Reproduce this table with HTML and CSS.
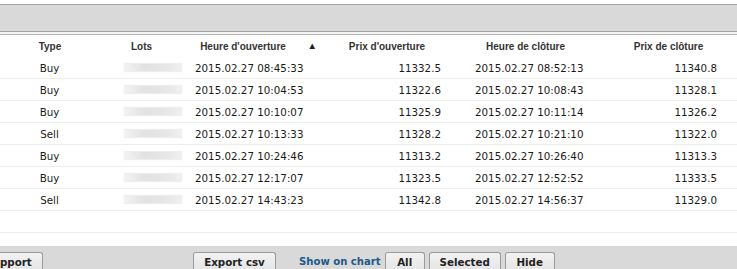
FILE: index.html
```html
<!DOCTYPE html>
<html>
<head>
<meta charset="utf-8">
<link rel="stylesheet" href="styles.css">
</head>
<body>
<div class="panel">
  <div class="topbar"></div>
  <div class="tablewrap">
    <table class="trades">
      <colgroup>
        <col class="c1"><col class="c2"><col class="c3"><col class="c4"><col class="c5"><col class="c6">
      </colgroup>
      <thead>
        <tr>
          <th>Type</th>
          <th>Lots</th>
          <th class="sorted"><span class="lbl">Heure d'ouverture</span><span class="arrow">▲</span></th>
          <th>Prix d'ouverture</th>
          <th>Heure de clôture</th>
          <th>Prix de clôture</th>
        </tr>
      </thead>
      <tbody>
        <tr><td class="type">Buy</td><td><div class="blur"></div></td><td class="ot">2015.02.27 08:45:33</td><td class="op">11332.5</td><td class="ct">2015.02.27 08:52:13</td><td class="cp">11340.8</td></tr>
        <tr><td class="type">Buy</td><td><div class="blur"></div></td><td class="ot">2015.02.27 10:04:53</td><td class="op">11322.6</td><td class="ct">2015.02.27 10:08:43</td><td class="cp">11328.1</td></tr>
        <tr><td class="type">Buy</td><td><div class="blur"></div></td><td class="ot">2015.02.27 10:10:07</td><td class="op">11325.9</td><td class="ct">2015.02.27 10:11:14</td><td class="cp">11326.2</td></tr>
        <tr><td class="type">Sell</td><td><div class="blur"></div></td><td class="ot">2015.02.27 10:13:33</td><td class="op">11328.2</td><td class="ct">2015.02.27 10:21:10</td><td class="cp">11322.0</td></tr>
        <tr><td class="type">Buy</td><td><div class="blur"></div></td><td class="ot">2015.02.27 10:24:46</td><td class="op">11313.2</td><td class="ct">2015.02.27 10:26:40</td><td class="cp">11313.3</td></tr>
        <tr><td class="type">Buy</td><td><div class="blur"></div></td><td class="ot">2015.02.27 12:17:07</td><td class="op">11323.5</td><td class="ct">2015.02.27 12:52:52</td><td class="cp">11333.5</td></tr>
        <tr><td class="type">Sell</td><td><div class="blur"></div></td><td class="ot">2015.02.27 14:43:23</td><td class="op">11342.8</td><td class="ct">2015.02.27 14:56:37</td><td class="cp">11329.0</td></tr>
        <tr class="empty"><td></td><td></td><td></td><td></td><td></td><td></td></tr>
      </tbody>
    </table>
  </div>
  <div class="footer">
    <button class="btn support">Support</button>
    <button class="btn export">Export csv</button>
    <span class="link">Show on chart</span>
    <button class="btn all">All</button>
    <button class="btn sel">Selected</button>
    <button class="btn hide">Hide</button>
  </div>
</div>
</body>
</html>
```
FILE: styles.css
```css
html, body {
  margin: 0;
  padding: 0;
  background: #ffffff;
  overflow: hidden;
}
body {
  width: 737px;
  height: 269px;
  font-family: "DejaVu Sans", Verdana, sans-serif;
}
.panel {
  display: flex;
  flex-direction: column;
  height: 269px;
  overflow: hidden;
}
.topbar {
  margin-top: 4px;
  height: 26px;
  flex: none;
  background: #d9d9d9;
  border-top: 1px solid #a3a3a3;
  border-bottom: 1px solid #a3a3a3;
  box-shadow: 0 2px 0 #f4f4f4, 0 3px 0 #b5b5b5;
}
.tablewrap {
  margin-top: 3px;
  flex: none;
}
.trades {
  border-collapse: collapse;
  table-layout: fixed;
  width: 737px;
}
.c1 { width: 100px; }
.c2 { width: 83px; }
.c3 { width: 140px; }
.c4 { width: 128px; }
.c5 { width: 149px; }
.c6 { width: 137px; }
th {
  height: 22px;
  padding: 0;
  font-family: "Liberation Sans", Arial, sans-serif;
  font-size: 10px;
  font-weight: bold;
  color: #333;
  text-align: center;
  vertical-align: middle;
}
th.sorted {
  position: relative;
  padding-right: 20px;
}
th .arrow {
  position: absolute;
  right: 6px;
  top: 5px;
  font-size: 9.5px;
  color: #222;
}
td {
  height: 21px;
  padding: 0;
  border-bottom: 1px solid #ededed;
  font-size: 10.3px;
  color: #1a1a1a;
  vertical-align: middle;
  white-space: nowrap;
}
td.type { text-align: center; padding-right: 1px; }
td.ot { padding-left: 12px; }
td.op { text-align: right; padding-right: 10px; }
td.ct { padding-left: 24px; }
td.cp { text-align: right; padding-right: 20px; }
.blur {
  margin-left: 24px;
  width: 58px;
  height: 7px;
  background: linear-gradient(90deg, #f3f3f3 0%, #e2e2e2 35%, #e6e6e6 70%, #f0f0f0 100%);
  box-shadow: 0 -1px 1px #eeeeee, 0 1px 1px #eeeeee;
}
.footer {
  margin-top: 13px;
  flex: 1;
  min-height: 0;
  background: #d9d9d9;
  display: flex;
  align-items: flex-start;
  padding-top: 6px;
}
.btn {
  font-family: "DejaVu Sans", Verdana, sans-serif;
  font-size: 10.3px;
  font-weight: bold;
  color: #222;
  white-space: nowrap;
  background: linear-gradient(#f2f2f2, #e4e4e4);
  border: 1px solid #9a9a9a;
  border-bottom: none;
  border-radius: 3px 3px 0 0;
  height: 20px;
  padding: 0 0 2px 0;
  margin: 0;
  line-height: 16px;
  flex: none;
}
.support {
  margin-left: -26px;
  width: 69px;
}
.export {
  margin-left: 150px;
  width: 83px;
}
.link {
  margin-left: 23px;
  flex: none;
  font-size: 10.1px;
  font-weight: bold;
  color: #1d5a8a;
  line-height: 18px;
  padding-top: 1px;
  white-space: nowrap;
}
.all {
  margin-left: 4px;
  width: 40px;
}
.sel {
  margin-left: 4px;
  width: 72px;
}
.hide {
  margin-left: 4px;
  width: 50px;
}
```
